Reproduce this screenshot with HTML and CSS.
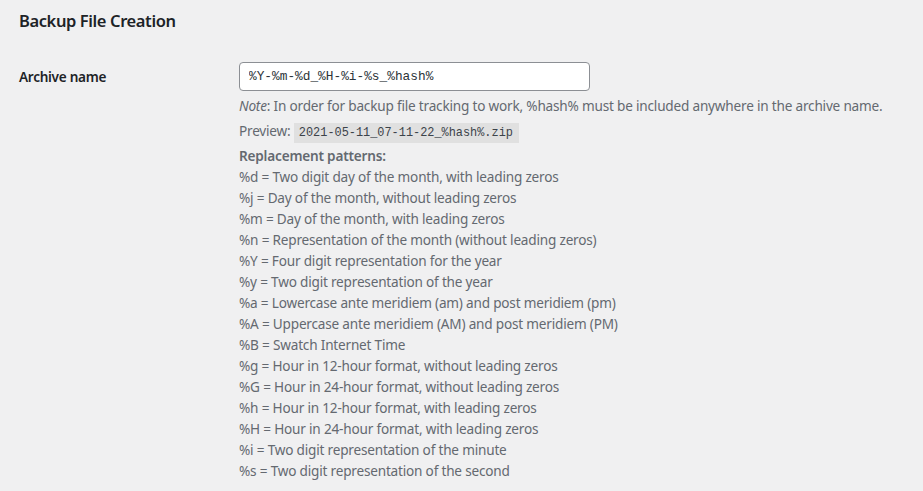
FILE: index.html
```html
<!DOCTYPE html>
<html lang="en">
<head>
<meta charset="utf-8">
<title>Backup File Creation</title>
<link rel="stylesheet" href="styles.css">
</head>
<body>
<div class="wrap">
  <h2 class="section-title">Backup File Creation</h2>
  <div class="form-row">
    <div class="label">Archive name</div>
    <div class="field">
      <input class="text-input" type="text" value="%Y-%m-%d_%H-%i-%s_%hash%">
      <p class="desc note"><em>Note</em>: In order for backup file tracking to work, %hash% must be included anywhere in the archive name.</p>
      <p class="desc preview">Preview: <code class="code">2021-05-11_07-11-22_%hash%.zip</code></p>
      <div class="desc patterns">
        <div class="patterns-title">Replacement patterns:</div>
        <div>%d = Two digit day of the month, with leading zeros</div>
        <div>%j = Day of the month, without leading zeros</div>
        <div>%m = Day of the month, with leading zeros</div>
        <div>%n = Representation of the month (without leading zeros)</div>
        <div>%Y = Four digit representation for the year</div>
        <div>%y = Two digit representation of the year</div>
        <div>%a = Lowercase ante meridiem (am) and post meridiem (pm)</div>
        <div>%A = Uppercase ante meridiem (AM) and post meridiem (PM)</div>
        <div>%B = Swatch Internet Time</div>
        <div>%g = Hour in 12-hour format, without leading zeros</div>
        <div>%G = Hour in 24-hour format, without leading zeros</div>
        <div>%h = Hour in 12-hour format, with leading zeros</div>
        <div>%H = Hour in 24-hour format, with leading zeros</div>
        <div>%i = Two digit representation of the minute</div>
        <div>%s = Two digit representation of the second</div>
      </div>
    </div>
  </div>
</div>
</body>
</html>
```

FILE: styles.css
```css
html, body {
  margin: 0;
  padding: 0;
  background: #f0f0f1;
}
body {
  font-family: "Noto Sans", "Open Sans", sans-serif;
  font-size: 13.6px;
  letter-spacing: -0.2px;
  color: #3c434a;
}
.wrap {
  padding: 0 0 0 19px;
}
.section-title {
  margin: 0;
  padding-top: 8px;
  font-size: 16.5px;
  letter-spacing: -0.4px;
  font-weight: 600;
  line-height: 26px;
  color: #1d2327;
}
.form-row {
  display: flex;
  margin-top: 28px;
}
.label {
  width: 220px;
  flex: none;
  font-weight: 600;
  color: #1d2327;
  line-height: 29px;
  letter-spacing: -0.3px;
}
.field {
  flex: 1;
}
.text-input {
  display: block;
  box-sizing: border-box;
  width: 351px;
  height: 29px;
  margin: 0;
  padding: 0 9px;
  border: 1px solid #8c8f94;
  border-radius: 4px;
  background: #fff;
  color: #2c3338;
  font-family: "Liberation Mono", "DejaVu Sans Mono", monospace;
  font-size: 12.8px;
  letter-spacing: 0;
}
.desc {
  margin: 0;
  color: #646970;
  line-height: 21px;
}
.note {
  margin-top: 4px;
}
.preview {
  margin-top: 5px;
  line-height: 20px;
}
.code {
  display: inline-block;
  padding: 0 6px 0 5px;
  background: #e0e0e0;
  color: #3c434a;
  font-family: "Liberation Mono", "DejaVu Sans Mono", monospace;
  font-size: 11.9px;
  letter-spacing: 0;
  line-height: 20px;
}
.patterns {
  margin-top: 2px;
}
.patterns-title {
  font-weight: 600;
}
```
